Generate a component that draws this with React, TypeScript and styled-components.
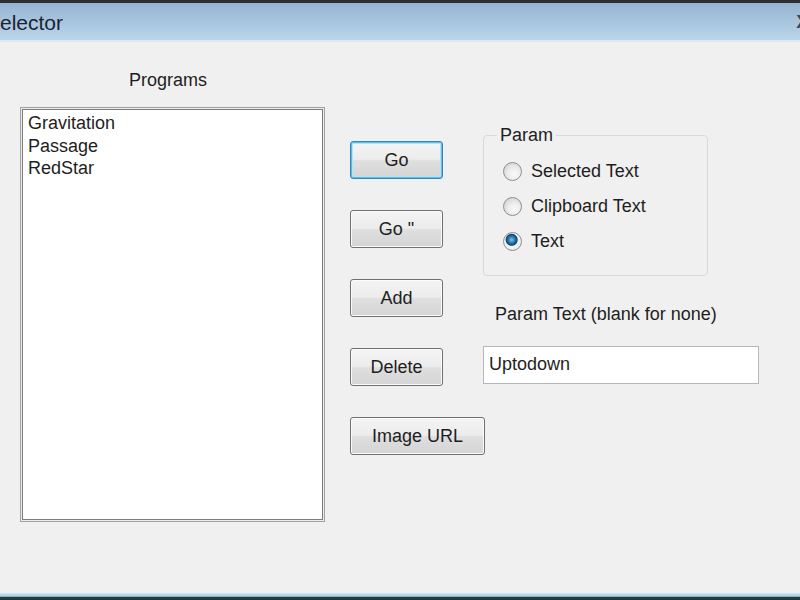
import styled, { createGlobalStyle } from 'styled-components'

const GlobalStyle = createGlobalStyle`
  html, body {
    margin: 0;
    padding: 0;
    background: #f0f0f0;
  }
  body {
    font-family: 'Liberation Sans', Arial, sans-serif;
    color: #1e1e1e;
  }
`

const programs = ['Gravitation', 'Passage', 'RedStar']
const actions = [
  { label: 'Go', focused: true },
  { label: 'Go "', focused: false },
  { label: 'Add', focused: false },
  { label: 'Delete', focused: false },
  { label: 'Image URL', focused: false, wide: true },
]
const params = [
  { label: 'Selected Text', checked: false },
  { label: 'Clipboard Text', checked: false },
  { label: 'Text', checked: true },
]

export default function App() {
  return (
    <>
      <GlobalStyle />
      <StyledWindow>
        <StyledTitleBar>
          <StyledTitle>Selector</StyledTitle>
          <StyledClose>X</StyledClose>
        </StyledTitleBar>

        <StyledBody>
          <StyledLeftColumn>
            <StyledProgramsLabel>Programs</StyledProgramsLabel>
            <StyledListBox>
              {programs.map((p) => (
                <StyledListItem key={p}>{p}</StyledListItem>
              ))}
            </StyledListBox>
          </StyledLeftColumn>

          <StyledButtonColumn>
            {actions.map((a) => (
              <StyledButton key={a.label} $focused={a.focused} $wide={a.wide}>
                {a.label}
              </StyledButton>
            ))}
          </StyledButtonColumn>

          <StyledRightColumn>
            <StyledGroup>
              <StyledLegend>Param</StyledLegend>
              <StyledRadioList>
                {params.map((p) => (
                  <StyledRadioRow key={p.label}>
                    <StyledRadio $checked={p.checked} />
                    <span>{p.label}</span>
                  </StyledRadioRow>
                ))}
              </StyledRadioList>
            </StyledGroup>

            <StyledFieldLabel>Param Text (blank for none)</StyledFieldLabel>
            <StyledTextBox>Uptodown</StyledTextBox>
          </StyledRightColumn>
        </StyledBody>

        <StyledBottomEdge />
      </StyledWindow>
    </>
  )
}

const StyledWindow = styled.div`
  display: flex;
  flex-direction: column;
  width: 800px;
  height: 600px;
  overflow: hidden;
  background: #f0f0f0;
`

const StyledTitleBar = styled.div`
  display: flex;
  align-items: center;
  justify-content: space-between;
  height: 37px;
  flex-shrink: 0;
  overflow: hidden;
  border-top: 3px solid #2e2e2e;
  border-bottom: 2px solid #dfe9f2;
  background: linear-gradient(#96b4d1, #bad5eb);
`

const StyledTitle = styled.span`
  margin-left: -14px;
  margin-top: 2px;
  font-size: 21px;
  color: #1a2330;
`

const StyledClose = styled.span`
  margin-right: -9px;
  font-size: 19px;
  font-weight: bold;
  color: #3a4450;
`

const StyledBody = styled.div`
  display: flex;
  flex: 1;
  padding-left: 20px;
`

const StyledLeftColumn = styled.div`
  display: flex;
  flex-direction: column;
  width: 305px;
`

const StyledProgramsLabel = styled.div`
  margin-top: 28px;
  padding-left: 109px;
  font-size: 18px;
  line-height: 21px;
`

const StyledListBox = styled.div`
  box-sizing: border-box;
  height: 415px;
  margin-top: 16px;
  padding: 4px 7px;
  background: #ffffff;
  border: 1px solid #a2a2a2;
  box-shadow: inset 0 0 0 1px #ececec, inset 0 0 0 2px #7c7c7c;
`

const StyledListItem = styled.div`
  font-size: 18px;
  line-height: 22.5px;
`

const StyledButtonColumn = styled.div`
  display: flex;
  flex-direction: column;
  align-items: flex-start;
  gap: 31px;
  width: 133px;
  margin-left: 25px;
  padding-top: 99px;
`

const StyledButton = styled.button<{ $focused?: boolean; $wide?: boolean }>`
  box-sizing: border-box;
  width: ${({ $wide }) => ($wide ? '135px' : '93px')};
  height: 38px;
  padding: 1px 0 0;
  font-family: 'Liberation Sans', Arial, sans-serif;
  font-size: 18px;
  color: #1e1e1e;
  border-radius: 3px;
  border: 1px solid ${({ $focused }) => ($focused ? '#3a86b8' : '#707070')};
  background: linear-gradient(#f4f4f4 0%, #ececec 48%, #dfdfdf 52%, #d4d4d4 100%);
  box-shadow: ${({ $focused }) =>
    $focused
      ? 'inset 0 0 0 1px #56bde6, inset 0 0 0 2px #b6e2f4'
      : 'inset 0 0 0 1px #fbfbfb'};
`

const StyledRightColumn = styled.div`
  display: flex;
  flex-direction: column;
  align-items: flex-start;
  padding-top: 83px;
`

const StyledGroup = styled.fieldset`
  box-sizing: border-box;
  width: 225px;
  height: 151px;
  margin: 0;
  padding: 0 0 0 19px;
  border: 1px solid #d3dbe2;
  border-radius: 4px;
`

const StyledLegend = styled.legend`
  margin-left: -6px;
  padding: 0 3px;
  font-size: 18px;
  line-height: 20px;
`

const StyledRadioList = styled.div`
  display: flex;
  flex-direction: column;
  padding-top: 9px;
`

const StyledRadioRow = styled.div`
  display: flex;
  align-items: center;
  gap: 9px;
  height: 35px;
  font-size: 18px;
`

const StyledRadio = styled.span<{ $checked?: boolean }>`
  box-sizing: border-box;
  width: 19px;
  height: 19px;
  border-radius: 50%;
  border: 1px solid #8c8e90;
  background: ${({ $checked }) =>
    $checked
      ? 'radial-gradient(circle at 45% 40%, #7cc4ee 0, #2a7fbf 3px, #154f80 5px, #0f3c62 5.5px, #f6f6f6 6.5px, #dedede 100%)'
      : 'radial-gradient(circle at 60% 65%, #fafafa 0, #ececec 40%, #c9c9c9 100%)'};
`

const StyledFieldLabel = styled.div`
  margin-top: 28px;
  padding-left: 12px;
  font-size: 18px;
  line-height: 21px;
`

const StyledTextBox = styled.div`
  box-sizing: border-box;
  width: 276px;
  height: 38px;
  margin-top: 21px;
  padding: 6px 5px;
  font-size: 18px;
  line-height: 22px;
  background: #ffffff;
  border: 1px solid #b5b7bc;
`

const StyledBottomEdge = styled.div`
  height: 7px;
  flex-shrink: 0;
  background: linear-gradient(#cdeaf3 0%, #a8d2e0 40%, #6d9bab 57%, #263a44 60%, #22343d 100%);
`
